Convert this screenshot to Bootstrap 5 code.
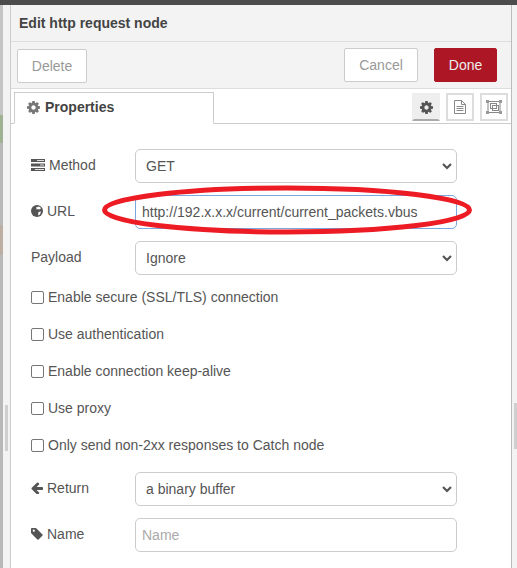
<!DOCTYPE html>
<html lang="en">
<head>
<meta charset="utf-8">
<title>Edit http request node</title>
<link rel="stylesheet" href="https://cdn.jsdelivr.net/npm/bootstrap@5.3.0/dist/css/bootstrap.min.css">
<style>
html,body{width:517px;height:568px;overflow:hidden;margin:0}
body{font-family:"Liberation Sans",Arial,sans-serif;font-size:14px;color:#555;background:#f3f3f3}
.topstrip{height:5px;background:#4c4c4c}
.shell{height:563px}
.leftedge{width:10px;flex:none;background:#f3f3f3;position:relative}
.canvasedge{width:3px;height:100%;background:linear-gradient(to bottom,#c4c4c4 0,#c4c4c4 110px,#9fb394 110px,#9fb394 138px,#b8b8b8 138px,#b8b8b8 220px,#bcaea2 220px,#bcaea2 250px,#b8b8b8 250px)}
.rightedge{position:relative;flex:1 1 auto}
.thumb{position:absolute;width:3px;height:46px;background:#cfcfcf}
.thumb-l{left:5px;top:400px}
.thumb-r{right:0;top:398px}
.tray{width:502px;flex:none;background:#fff;border-left:1px solid #ccc;border-right:1px solid #bbb}
.titlebar{height:37px;background:#f3f3f3;border-bottom:1px solid #ddd;padding:0 8px;font-weight:700;color:#444}
.actionbar{height:47px;background:#f3f3f3;border-bottom:1px solid #ddd;padding:0 14px 0 6px}
.rbtn{font-size:14px;height:34px;padding:0;border-radius:2px;background:#fff;border:1px solid #ccc;color:#999;display:flex;align-items:center;justify-content:center}
.w-del{width:70px;margin-top:7px}
.w-can{width:74px}
.w-done{width:63px;background:#ad1625;border-color:#ad1625;color:#eee}
.btngroup{margin-top:6px;gap:16px}
.tabstrip{height:35px;border-bottom:1px solid #ccc}
.proptab{width:200px;height:32px;margin:3px 0 -1px 3px;border:1px solid #ccc;border-bottom-color:#fff;background:#fff;font-weight:700;color:#444;padding:0 0 2px 12px;gap:5px}
.minitabs{gap:6px;padding:4px 3px 0 0}
.mini{width:28px;height:28px;border:2px solid #ddd;background:#fff;display:flex;align-items:center;justify-content:center}
.mini.on{background:#eee;border-color:#eee;border-bottom-color:#aaa}
.formarea{padding:25px 39px 0 20px}
.fstack{gap:12px}
.frow{height:34px}
.flabel{width:104px;flex:none;gap:4px;color:#555;padding-bottom:2px}
.fctl.form-select,.fctl.form-control{width:322px;height:34px;font-size:14px;border:1px solid #ccc;border-radius:5px;color:#555;box-shadow:none;font-family:inherit}
.fctl.form-select{padding:0 24px 0 10px;background-image:url("data:image/svg+xml,%3csvg xmlns='http://www.w3.org/2000/svg' viewBox='0 0 10 7'%3e%3cpath fill='none' stroke='%23555' stroke-width='2.200' d='M1 1l4 4 4-4'/%3e%3c/svg%3e");background-size:10px 7px;background-position:right 4px center}
.fctl.form-control{padding:0 6px}
.fctl.active-url{border-color:#7ba7e0}
.fctl::placeholder{color:#aaa}
.checks{margin:4px 0 8px}
.crow{height:37px;gap:4px}
.crow .form-check-input{width:13px;height:13px;margin:0 0 1px;border:1px solid #767676;border-radius:2px;flex:none}
.crow label{color:#555;padding-bottom:1px}
.ovalwrap{position:relative}
.oval{position:absolute;left:71px;top:-11px;pointer-events:none}
</style>
</head>
<body>
<div class="topstrip"></div>
<div class="shell d-flex">
  <div class="leftedge"><div class="canvasedge"></div><div class="thumb thumb-l"></div></div>
  <div class="tray d-flex flex-column">
    <div class="titlebar d-flex align-items-center">Edit http request node</div>
    <div class="actionbar d-flex justify-content-between">
      <button class="rbtn w-del" type="button">Delete</button>
      <div class="d-flex btngroup">
        <button class="rbtn w-can" type="button">Cancel</button>
        <button class="rbtn w-done" type="button">Done</button>
      </div>
    </div>
    <div class="tabstrip d-flex justify-content-between">
      <div class="proptab d-flex align-items-center">
        <svg width="13" height="13" viewBox="128 128 1536 1536"><path fill="#777" d="M1152 896q0-106-75-181t-181-75-181 75-75 181 75 181 181 75 181-75 75-181zm512-109v222q0 12-8 23t-19 13l-185 28q-19 54-39 91 35 50 107 138 10 12 10 25t-9 23q-27 37-99 108t-94 71q-12 0-26-9l-138-108q-44 23-91 38-16 136-29 186-7 28-36 28h-222q-14 0-24.500-8.500t-11.500-21.500l-28-184q-49-16-90-37l-141 107q-10 9-25 9-14 0-25-11-126-114-165-168-7-10-7-23 0-12 8-23 15-21 51-66.500t54-70.500q-27-50-41-99l-183-27q-13-2-21-12.500t-8-23.500v-222q0-12 8-23t19-13l186-28q14-46 39-92-40-57-107-138-10-12-10-24 0-10 9-23 26-36 98.500-107.500t94.500-71.500q13 0 26 10l138 107q44-23 91-38 16-136 29-186 7-28 36-28h222q14 0 24.500 8.500t11.500 21.500l28 184q49 16 90 37l142-107q9-9 24-9 13 0 25 10 129 119 165 170 7 8 7 22 0 12-8 23-15 21-51 66.500t-54 70.500q26 50 41 98l183 28q13 2 21 12.500t8 23.500z"/></svg>
        Properties
      </div>
      <div class="minitabs d-flex">
        <div class="mini on"><svg width="13" height="13" viewBox="128 128 1536 1536"><path fill="#555" d="M1152 896q0-106-75-181t-181-75-181 75-75 181 75 181 181 75 181-75 75-181zm512-109v222q0 12-8 23t-19 13l-185 28q-19 54-39 91 35 50 107 138 10 12 10 25t-9 23q-27 37-99 108t-94 71q-12 0-26-9l-138-108q-44 23-91 38-16 136-29 186-7 28-36 28h-222q-14 0-24.500-8.500t-11.500-21.500l-28-184q-49-16-90-37l-141 107q-10 9-25 9-14 0-25-11-126-114-165-168-7-10-7-23 0-12 8-23 15-21 51-66.500t54-70.500q-27-50-41-99l-183-27q-13-2-21-12.500t-8-23.500v-222q0-12 8-23t19-13l186-28q14-46 39-92-40-57-107-138-10-12-10-24 0-10 9-23 26-36 98.500-107.500t94.500-71.500q13 0 26 10l138 107q44-23 91-38 16-136 29-186 7-28 36-28h222q14 0 24.500 8.500t11.500 21.500l28 184q49 16 90 37l142-107q9-9 24-9 13 0 25 10 129 119 165 170 7 8 7 22 0 12-8 23-15 21-51 66.500t-54 70.500q26 50 41 98l183 28q13 2 21 12.500t8 23.500z"/></svg></div>
        <div class="mini"><svg width="12" height="14" viewBox="0 0 12 14" fill="none" stroke="#888"><path d="M.5.500h7l4 4v9h-11z"/><path d="M7.500.500v4h4M2.500 6.500h7M2.500 8.500h7M2.500 10.500h7"/></svg></div>
        <div class="mini"><svg width="16" height="14" viewBox="0 0 16 14" fill="none" stroke="#888"><rect x="2" y="1.500" width="12" height="11"/><rect x="4.500" y="3.500" width="6" height="5"/><rect x="6.500" y="5.500" width="6" height="5"/><g fill="#999" stroke="none"><rect x="0" y="0" width="3" height="3"/><rect x="13" y="0" width="3" height="3"/><rect x="0" y="11" width="3" height="3"/><rect x="13" y="11" width="3" height="3"/></g></svg></div>
      </div>
    </div>
    <div class="formarea">
      <div class="d-flex flex-column fstack">
        <div class="frow d-flex align-items-center">
          <div class="flabel d-flex align-items-center"><svg width="14" height="12" viewBox="0 0 14 12"><path fill="#555" d="M0 0h14v3H0zM0 4.500h14v3H0zM0 9h14v3H0z"/><path fill="#ddd" d="M6 1h7v1H6zM9 5.500h4v1H9zM4 10h9v1H4z"/></svg>Method</div>
          <select class="form-select fctl"><option>GET</option></select>
        </div>
        <div class="frow d-flex align-items-center ovalwrap">
          <div class="flabel d-flex align-items-center"><svg width="12" height="12" viewBox="0 0 12 12"><circle cx="6" cy="6" r="6" fill="#555"/><path fill="#fff" d="M5 2.500l3-1 2 1.500-1 1.500-2.500-.5-.5 1zM7.500 7l2.500-.5-1 3-2 1z"/></svg>URL</div>
          <input class="form-control fctl active-url" value="http://192.x.x.x/current/current_packets.vbus">
          <svg class="oval" width="370" height="52" viewBox="0 0 370 52"><ellipse cx="185" cy="26" rx="182.500" ry="22" fill="none" stroke="#ed1c24" stroke-width="5"/></svg>
        </div>
        <div class="frow d-flex align-items-center">
          <div class="flabel">Payload</div>
          <select class="form-select fctl"><option>Ignore</option></select>
        </div>
      </div>
      <div class="checks">
        <div class="crow d-flex align-items-center"><input class="form-check-input" type="checkbox" id="c1"><label for="c1">Enable secure (SSL/TLS) connection</label></div>
        <div class="crow d-flex align-items-center"><input class="form-check-input" type="checkbox" id="c2"><label for="c2">Use authentication</label></div>
        <div class="crow d-flex align-items-center"><input class="form-check-input" type="checkbox" id="c3"><label for="c3">Enable connection keep-alive</label></div>
        <div class="crow d-flex align-items-center"><input class="form-check-input" type="checkbox" id="c4"><label for="c4">Use proxy</label></div>
        <div class="crow d-flex align-items-center"><input class="form-check-input" type="checkbox" id="c5"><label for="c5">Only send non-2xx responses to Catch node</label></div>
      </div>
      <div class="d-flex flex-column fstack">
        <div class="frow d-flex align-items-center">
          <div class="flabel d-flex align-items-center"><svg width="12" height="12" viewBox="128 128 1536 1536"><path fill="#555" d="M1664 896v128q0 53-32.500 90.500t-84.500 37.500h-704l293 294q38 36 38 90t-38 90l-75 76q-38 38-90 38-53 0-91-38l-651-652q-37-37-37-90 0-52 37-91l651-650q38-38 91-38 52 0 90 38l75 74q38 38 38 91t-38 91l-293 293h704q52 0 84.500 37.500t32.500 90.500z"/></svg>Return</div>
          <select class="form-select fctl"><option>a binary buffer</option></select>
        </div>
        <div class="frow d-flex align-items-center">
          <div class="flabel d-flex align-items-center"><svg width="12" height="12" viewBox="0 0 12 12"><path fill="#555" fill-rule="evenodd" d="M.8 0h3.700q.6 0 1 .4l6 6q.6.6 0 1.200l-3.900 3.900q-.6.6-1.200 0l-6-6q-.4-.4-.4-1V.8Q0 0 .8 0zM2.800 1.600a1.100 1.100 0 1 0 0 2.200 1.100 1.100 0 0 0 0-2.200z"/></svg>Name</div>
          <input class="form-control fctl" placeholder="Name">
        </div>
      </div>
    </div>
  </div>
  <div class="rightedge"><div class="thumb thumb-r"></div></div>
</div>
<script src="https://cdn.jsdelivr.net/npm/bootstrap@5.3.0/dist/js/bootstrap.bundle.min.js"></script>
</body>
</html>
